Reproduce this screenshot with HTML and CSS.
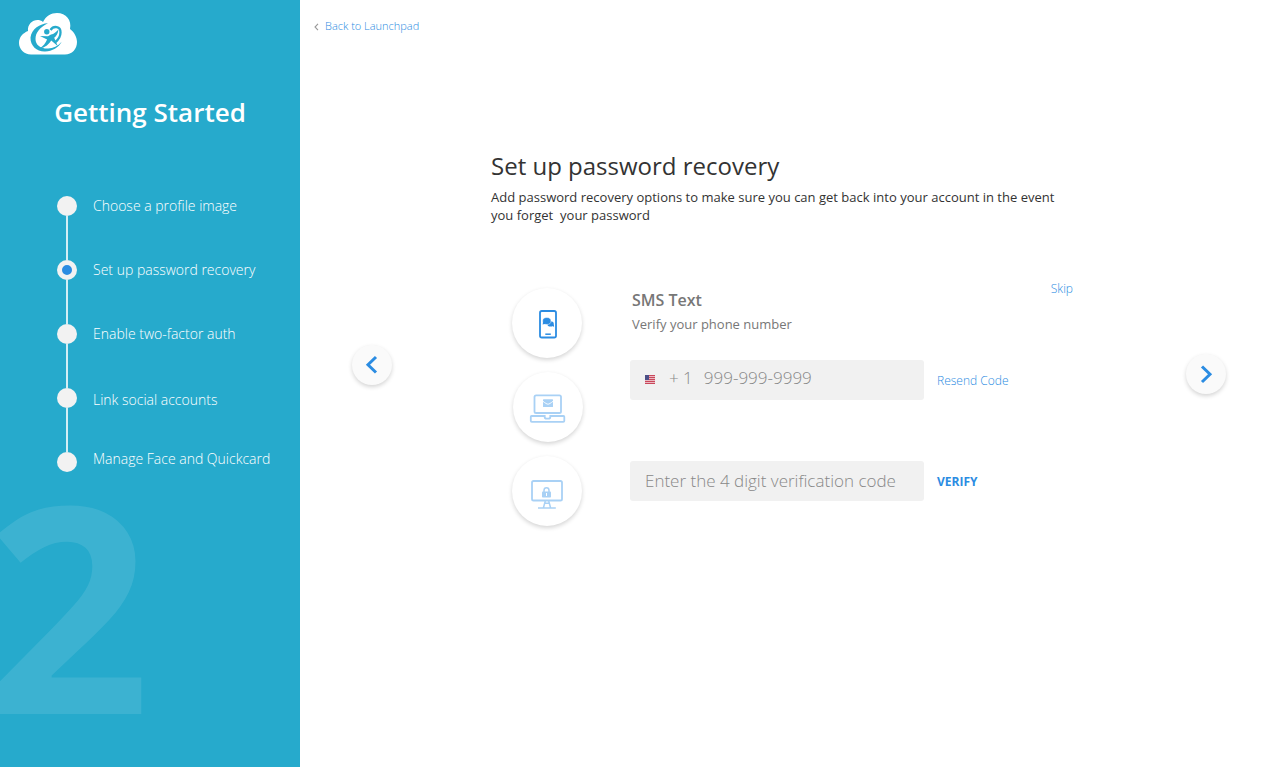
FILE: index.html
```html
<!DOCTYPE html>
<html lang="en">
<head>
<meta charset="utf-8">
<title>Getting Started</title>
<link rel="stylesheet" href="styles.css">
</head>
<body>
<aside class="sidebar">
  <svg class="logo" width="60" height="44" viewBox="0 0 60 44">
    <path fill="#fff" d="M13 42.500C6 42.500 1 37 1 31c0-6 4-10 9-12-1-9 9-14 15-9C28 4 33 1 39 1c9 0 15 7 13 16 4 3 7 8 7 13 0 7-5 12.500-12 12.500z"/>
    <path fill="#26aacc" d="M30 11.200C22 11.500 13.500 17 12.500 25.500c-.3 8.500 6.700 14.500 14.700 14.100 7-.3 13.500-4 16.500-9.800-4 4.500-8.500 6.800-13.500 6.800C22 36.800 17.500 32.500 17.500 27c0-6.500 4.500-12 12.500-15.800z"/>
    <path fill="none" stroke="#26aacc" stroke-width="2.300" d="M32.500 18c3-4.500 10.200-4 10 2.500 0 3.500-2 7-5 9.500"/>
    <path fill="#26aacc" d="m22 24 8 .2 3-1.700c3-.3 5-2.500 7.500-5-.6 4.500-2.300 6.800-4.300 8.200l3.500 8.300-6.500-5.500c-2.500 4-6 7-11.500 8 3.500-2.500 6-5.300 7.400-9z"/>
    <circle cx="28.800" cy="19.800" r="2.700" fill="#26aacc"/>
  </svg>
  <h1 class="sidebar-title">Getting Started</h1>
  <ol class="steps">
    <li class="step"><span class="dot"></span><span class="label">Choose a profile image</span></li>
    <li class="step active"><span class="dot"></span><span class="label">Set up password recovery</span></li>
    <li class="step"><span class="dot"></span><span class="label">Enable two-factor auth</span></li>
    <li class="step step-social"><span class="dot"></span><span class="label">Link social accounts</span></li>
    <li class="step step-manage"><span class="dot"></span><span class="label">Manage Face and Quickcard</span></li>
  </ol>
  <div class="big-number">2</div>
</aside>
<main class="main">
  <a class="back"><svg width="5" height="8" viewBox="0 0 5 8"><path d="M4 .8 1 4l3 3.200" fill="none" stroke="#999" stroke-width="1.100"/></svg><span>Back to Launchpad</span></a>
  <div class="stage">
    <button class="arrow prev"><svg width="40" height="40" viewBox="0 0 40 40"><path d="m24 12-8 7.800 8 7.700"/></svg></button>
    <section class="content">
      <h2 class="title">Set up password recovery</h2>
      <p class="intro">Add password recovery options to make sure you can get back into your account in the event<br>you forget&nbsp; your password</p>
      <div class="recovery">
        <div class="methods">
          <div class="method"><svg width="70" height="70" viewBox="0 0 70 70">
            <rect x="28" y="23" width="16" height="26.500" rx="1.800" fill="none" stroke="#2b8ce2" stroke-width="1.800"/>
            <path d="M33.300 46.200h5.500" stroke="#2b8ce2" stroke-width="1.500"/>
            <path d="m40.500 37.500 1.600 1.800-.3-3z" fill="#2b8ce2"/><ellipse cx="38.600" cy="35.900" rx="3.200" ry="2.700" fill="#2b8ce2"/>
            <ellipse cx="34.800" cy="33" rx="4.200" ry="3.500" fill="#2b8ce2" stroke="#fff" stroke-width=".5"/><path d="m31.200 33.500-.6 3 3-.8z" fill="#2b8ce2"/>
          </svg></div>
          <div class="method method-email"><svg width="70" height="70" viewBox="0 0 70 70">
            <g fill="none" stroke="#a9d1f5" stroke-width="1.800"><rect x="21.500" y="23.300" width="26.500" height="17.700" rx="1.600"/><path d="M18.500 44h13.200v1c0 1.200.8 1.700 2 1.700h1.600c1.200 0 2-.5 2-1.700v-1H50.500c.6 0 .8.3.8.8v4c0 .6-.4 1-1 1h-31.500c-.6 0-1-.4-1-1v-4c0-.5.200-.8.700-.8z"/></g>
            <rect x="30" y="27.300" width="10" height="7.800" rx=".6" fill="#a9d1f5"/><path d="m30 29.300c2 1.700 4 2.900 5 2.900s3-1.200 5-2.900" fill="none" stroke="#fff" stroke-width=".9"/>
          </svg></div>
          <div class="method"><svg width="70" height="70" viewBox="0 0 70 70">
            <g fill="none" stroke="#a9d1f5" stroke-width="1.800"><rect x="20" y="25" width="30" height="19.500" rx="1.600"/><path d="m33.300 45-1.800 6.500M36.700 45l1.800 6.500M32.500 47.300h5M26 51.900h17.800" stroke-width="1.500"/><path d="M32 36v-1.500c0-3.600 5-3.600 5 0V36" stroke-width="1.500"/></g>
            <rect x="30" y="35.500" width="9" height="6" rx=".8" fill="#a9d1f5"/><path d="M34.500 37v3" stroke="#fff"/>
          </svg></div>
        </div>
        <div class="form">
          <div class="form-head">
            <div><h3 class="method-name">SMS Text</h3><p class="method-hint">Verify your phone number</p></div>
            <a class="skip">Skip</a>
          </div>
          <div class="row phone-row">
            <div class="field phone">
              <svg width="10" height="9" viewBox="0 0 10 9"><path fill="#eab9c1" d="M0 0h10v9H0z"/><path d="M0 .5h10M0 2.500h10M0 4.500h10M0 6.500h10M0 8.500h10" stroke="#c9485b"/><path fill="#4c4f86" d="M0 0h4v5H0z"/></svg>
              <span class="prefix">+ 1</span><span class="number">999-999-9999</span>
            </div>
            <a class="resend">Resend Code</a>
          </div>
          <div class="row code-row">
            <div class="field">Enter the 4 digit verification code</div>
            <a class="verify">VERIFY</a>
          </div>
        </div>
      </div>
    </section>
    <button class="arrow next"><svg width="40" height="40" viewBox="0 0 40 40"><path d="m16 12.500 8 7.800-8 7.700"/></svg></button>
  </div>
</main>
</body>
</html>
```
FILE: styles.css
```css
* { box-sizing: border-box; }
body { margin: 0; width: 1281px; height: 767px; display: flex; overflow: hidden; background: #fff; font-family: "Open Sans", sans-serif; color: #333; }
h1, h2, h3, p, ol { margin: 0; padding: 0; }

.sidebar { position: relative; width: 300px; height: 767px; flex: none; overflow: hidden; background: #26aacc; color: #fff; }
.logo { display: block; margin: 12px 0 0 18px; }
.sidebar-title { margin-top: 38px; text-align: center; font-size: 26px; line-height: 36px; font-weight: 600; }
.steps { margin: 66px 0 0 57px; list-style: none; }
.step { position: relative; display: flex; align-items: center; height: 20px; margin-bottom: 44px; }
.step:not(:last-child)::after { content: ""; position: absolute; left: 9px; top: 20px; width: 2px; height: 44px; background: #d3eef5; }
.dot { width: 20px; height: 20px; margin-right: 16px; border-radius: 50%; background: #f2f2f2; }
.active .dot { border: 5px solid #f2f2f2; background: #2b8ce2; }
.label { font-size: 14px; line-height: 20px; font-weight: 300; white-space: nowrap; }
.step-social .label { padding-top: 4px; }
.step-manage .label { padding-bottom: 6px; }
.big-number { position: absolute; left: -14px; top: 498px; font-size: 288px; line-height: 208px; font-weight: 700; color: rgba(255, 255, 255, .1); }

.main { width: 981px; }
.back { display: flex; align-items: center; height: 52px; padding-left: 14px; gap: 6px; font-size: 11px; font-weight: 300; color: #2b8ce2; }
.back svg { margin-top: 2px; }
.back span { padding-bottom: 1px; line-height: 15px; }
.stage { display: flex; align-items: flex-start; }
.arrow { flex: none; width: 40px; height: 40px; padding: 0; border: 0; border-radius: 50%; background: #fafafa; box-shadow: 0 2px 4px rgba(0, 0, 0, .17); }
.arrow svg { display: block; fill: none; stroke: #2b8ce2; stroke-width: 3; }
.prev { margin: 293px 0 0 52px; }
.next { margin-top: 302px; }
.content { width: 600px; margin: 96px 95px 0 99px; }
.title { font-size: 24px; line-height: 36px; font-weight: 400; }
.intro { margin-top: 4px; font-size: 13px; line-height: 18px; letter-spacing: .008px; white-space: nowrap; }
.recovery { display: flex; margin-top: 56px; }
.methods { display: flex; flex-direction: column; gap: 14px; margin: 8px 48px 0 21px; }
.method { width: 70px; height: 70px; border-radius: 50%; background: #fff; box-shadow: 0 2px 4px rgba(0, 0, 0, .17); }
.method-email { margin-left: 1px; margin-right: -1px; }
.form { width: 461px; }
.form-head { display: flex; justify-content: space-between; height: 80px; padding: 0 18px 0 2px; }
.method-name { margin-top: 9px; font-size: 16px; line-height: 22px; font-weight: 600; color: #777; }
.method-hint { margin-top: 4px; font-size: 13px; line-height: 18px; color: #777; }
.skip { font-size: 12px; line-height: 18px; font-weight: 300; color: #2b8ce2; }
.row { display: flex; align-items: center; gap: 13px; height: 40px; }
.code-row { margin-top: 61px; }
.field { display: flex; align-items: center; width: 294px; height: 40px; padding: 0 0 1px 15px; border-radius: 3px; background: #f1f1f1; font-size: 17px; line-height: 24px; font-weight: 300; color: #888; white-space: nowrap; }
.phone { padding-bottom: 5px; }
.phone svg { margin-top: 4px; }
.prefix { margin-left: 14px; }
.number { margin-left: 11px; }
.resend { font-size: 12px; font-weight: 300; color: #2b8ce2; }
.verify { font-size: 12px; font-weight: 700; color: #2b8ce2; }
```
